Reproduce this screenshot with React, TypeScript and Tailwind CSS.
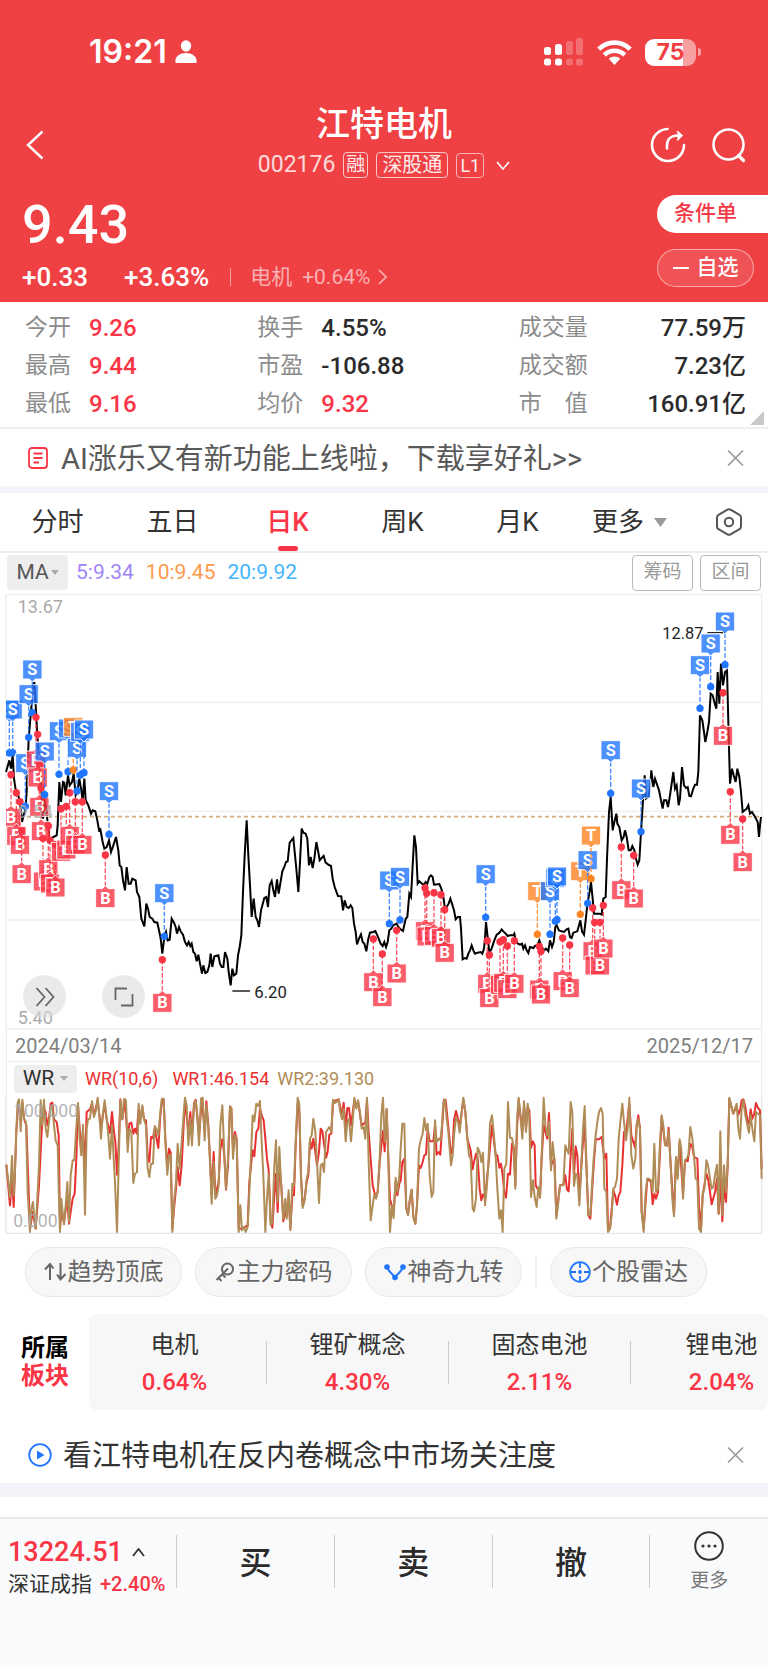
import type { ReactNode } from "react";

type Point = [number, number];

const parse = (text: string, dx = 0, dy = 0): Point[] =>
  text
    .trim()
    .split(/\s+/)
    .map((pair) => {
      const [x, y] = pair.split(",").map(Number);
      return [x + dx, y + dy];
    });

const toPoints = (points: Point[]) => points.map((p) => p.join(",")).join(" ");

const PRICE = toPoints([
  ...parse(`18,540 28,505 33,530 38,490 42,560 48,600 55,610 60,635 66,690 72,665 76,655 80,600 86,440 92,370 98,300
    103,270 107,340 112,430 118,515 124,590 129,680 134,620 138,650 144,700 150,740 160,735 170,730 173,700 178,570
    183,630 189,570 193,572 197,610 204,550 209,580 216,570 221,545 227,610 232,600 238,560 243,590 248,625 253,560
    257,625 265,640 273,665 278,655 286,658 292,685 297,715 301,712 308,750 313,770 320,765 327,745 333,780 340,760
    348,735 355,775 359,820 364,825 369,865 375,895 380,825 386,875 392,875 397,860 407,865 411,900 418,915 424,980
    433,1003 439,935 444,950 449,975 457,980 463,990 472,992 477,1015 482,1040 487,1085 493,1035 498,1020 503,1045
    509,1043 515,980 522,992 527,1005 531,1025 537,1005 543,1020 549,1028 555,1050 561,1060 566,1050 571,1062 575,1055
    580,1080 585,1085 590,1108 595,1088 600,1115 606,1145 610,1120 616,1143 622,1140 628,1120 632,1085 637,1125
    643,1093 655,1090 660,1115 665,1125 670,1125 675,1080 682,1100 686,1140 692,1180 697,1130 702,1150 709,1145
    714,1090 719,1065 724,1030 729,900 734,790 740,685 745,790 750,880`),
  ...parse(
    `5,405 11,350 17,405 22,415 27,435 33,385 43,348 49,345 54,375 59,310 65,297 70,325 75,345 81,292 86,335 97,268
    103,255 108,240 113,238 119,182 130,168 135,220 139,260 145,330 150,240 155,140 160,152 167,155 172,170 177,250
    182,225 188,258 193,230 199,180 204,205 209,235 215,228 221,222 227,242 235,248 243,252 248,290 254,315 264,342
    274,343 279,385 284,355 290,375 296,378 302,370 307,378 312,425 317,450 321,487 327,470 333,457 338,480 343,485
    349,508 355,470 360,452 370,450 376,447 382,460 392,485 398,492 403,480 408,495 413,480 418,445 424,440 430,430
    440,425 445,435 450,440 459,447 467,410 472,405 478,335 483,345 488,250 493,160 498,195 503,305 508,298 516,305
    522,308 527,300 532,305 538,285 543,280 548,285 552,308 562,307 568,306 574,320 580,345 585,380 590,375 596,365
    601,350 606,365 612,385 617,412 623,405 630,405 633,440 638,532 645,528 650,530 655,515 660,505 665,490 670,505
    675,515 683,512 692,510 697,515 702,500 705,470 708,420 713,465 718,510 723,505 728,490 733,475 740,458 745,455
    750,450 755,442 760,448 767,455 773,462 780,460 790,460`,
    750,
    570
  ),
  ...parse(
    `163,1025 168,1050 174,1055 180,1058 186,1055 190,1070 195,1060 200,1075 205,1083 210,1065 220,1068 225,1062
    232,1060 238,1045 245,1065 252,1075 258,1070 265,1078 270,1045 276,1065 281,1050 286,1005 290,1000 297,1015
    305,1018 312,1020 320,1012 325,1010 330,1035 335,1038 340,1022 352,1018 357,1000 361,985 366,1018 372,1028
    377,985 383,930 388,905 393,870 398,920 402,965 410,965 418,965 425,968 430,920 437,915 441,800 447,660 452,615
    458,715 463,690 469,665 472,695 478,705 485,745 491,735 495,715 500,735 506,775 512,775 517,762 523,775 528,800
    533,818 538,805 543,720 548,640 554,550 558,620 565,615 570,590 574,535 580,585 585,560 592,580 597,595 602,620
    608,650 612,625 619,625 624,645 630,610 640,540 645,590 650,580 656,640 660,620 666,525 672,580 678,588 683,585
    688,612 693,613 700,590 705,578 711,578 715,540 720,370 727,385 732,420 736,450 742,420 747,390 752,305 758,310
    763,330 769,350 773,240 778,335 783,215 789,280 795,240 801,235 806,430 810,575 816,530 821,550 827,570 832,530
    838,555 843,600 848,660 854,655 860,650 865,640 870,665 876,660 882,670 888,680 893,690 897,735 900,700 903,675`,
    1380
  ),
]);

const WR_TOP = -189;

const WR_SLOW = toPoints([
  ...parse(
    `19,398 30,520 36,430 41,525 49,300 55,210 62,260 67,210 72,260 79,280 85,450 90,590 98,540 107,590 117,460
    125,300 130,225 137,240 142,280 147,260 152,215 157,212 162,262 170,270 176,310 180,590 184,540 192,570 202,500
    207,575 212,540 218,500 224,485 229,380 234,220 244,360 249,300 255,400 260,240 270,232 276,215 282,250 293,205
    303,290 314,215 320,262 330,303 336,240 341,290 346,330 351,428 356,340 361,202 367,262 375,202 383,330 388,275
    394,272 400,305 405,290 410,305 416,230 421,260 427,225 432,262 438,265 443,370 448,390 453,315 459,318 464,290
    475,348 481,250 487,200 491,202 496,320 502,410 507,350 512,362 517,590 523,520 528,470 533,405 539,460 545,400
    550,300 555,205 565,300 571,240 576,310 582,215 587,203 597,310 606,200 614,300 619,208 625,280 630,380 635,490
    641,360 646,490 656,450 661,350 667,322 673,370 678,473 684,400 690,223 694,228 699,350 705,300 710,320 716,590
    726,590 743,580 748,450 753,400 758,355 763,373 769,300 775,290 780,230 785,250 791,265 796,320 801,380 806,415
    812,570 817,587 823,490 828,425 833,540 838,400 844,460 850,568 856,530 860,555 866,490 871,590 877,490 882,490
    887,340 893,215 898,240 903,430 908,520 914,500 920,450 925,430 930,325 935,350 940,320 946,360 951,400 957,360
    962,290 967,297 972,335 978,377 983,360 988,308 994,305 999,208 1016,202 1026,250 1031,212 1037,290 1042,228
    1047,228 1053,280 1063,205 1069,225 1074,207 1085,280 1096,272 1101,205 1106,300 1112,380 1118,460 1123,480
    1128,495 1133,480 1139,390 1144,340 1149,297 1154,358 1160,232 1165,380`,
    0,
    WR_TOP
  ),
  ...parse(
    `30,500 36,525 41,540 47,450 52,490 58,455 62,445 67,390 73,380 79,530 84,548 90,500 95,473 100,555 106,575
    111,520 117,400 122,408 128,390 133,370 138,367 143,290 149,328 160,328 165,280 170,368 176,360 181,368 186,290
    192,203 197,203 205,285 213,365 218,350 222,265 228,237 234,260 239,285 244,250 250,202 256,240 262,320 272,355
    278,412 282,390 288,365 293,380 299,470 304,505 309,487 315,500 325,400 336,280 341,320 347,370 352,370 358,407
    363,395 368,430 373,480 378,497 384,425 390,428 396,335 401,345 406,460 411,290 416,203 427,300 432,220 438,290
    443,225 448,235 453,347 459,328 464,340 467,460 475,475 480,497 485,380 491,280 502,320 507,243 513,400 523,380
    529,550 540,460 550,458 556,430 561,473 566,478 572,370 577,290 582,430 587,343 592,370 598,500 604,400 609,330
    614,285 620,420 625,550 631,560 641,400 647,322 657,322 665,315 673,380 679,365 684,590 690,590 700,475 705,490
    711,518 716,490 721,480 727,400 732,300 738,305 748,215 754,310 765,347 770,280 775,250 780,290 785,540 791,590
    802,440 813,450 818,517 823,485 828,500 834,480 840,360 845,255 855,335 861,340 866,287 872,400 882,545 888,380
    893,430 899,330 909,490 915,385 923,388 931,335 937,345 942,375 952,380 957,520 963,590 968,490 979,425 984,440
    990,480 995,517 1005,480 1011,440 1016,545 1021,440 1027,568 1032,460 1038,510 1043,400 1048,200 1060,245
    1070,222 1075,248 1080,235 1085,205 1090,202 1096,225 1102,265 1107,275 1112,232 1117,260 1123,245 1128,213
    1134,228 1140,235 1145,410`,
    1140,
    WR_TOP
  ),
]);

const WR_FAST = toPoints([
  ...parse(
    `19,398 24,440 30,495 36,372 41,490 45,420 49,290 53,212 57,202 62,298 67,203 72,260 78,270 83,480 90,600 94,530
    99,510 103,560 107,590 112,500 117,400 122,205 127,280 132,203 137,290 142,315 147,270 152,225 157,225 162,280
    167,325 173,340 177,500 180,600 184,500 188,540 192,577 197,520 202,450 207,570 212,430 218,385 223,385 228,300
    234,213 239,320 244,370 249,278 255,548 260,290 264,262 270,260 276,208 282,255 288,235 293,197 298,250 303,320
    308,250 314,205 320,260 325,310 330,380 336,280 341,380 345,450 351,600 356,400 361,205 367,262 372,202 378,205
    383,360 388,290 394,300 400,453 405,425 411,420 416,215 421,275 427,220 432,262 438,280 443,410 448,435 453,395
    459,395 464,282 469,290 475,310 481,240 485,202 491,200 496,330 502,428 507,370 512,370 517,600 523,500 528,450
    533,335 539,410 545,330 550,260 555,197 560,220 565,340 571,260 576,340 582,220 587,205 592,250 597,340 603,200
    608,197 614,325 619,220 625,290 630,390 635,515 641,390 646,500 651,490 656,460 661,280 667,220 673,370 678,470
    684,380 690,225 694,230 699,380 705,310 710,320 716,600 721,520 726,595 732,585 737,600 743,585 748,480 753,370
    758,250 763,268 769,215 775,222 780,207 785,330 790,430 796,600 801,500 806,425 812,580 817,570 823,400 828,325
    833,510 838,345 844,470 850,560 856,500 860,560 866,475 871,595 877,455 882,460 887,330 893,197 898,215 903,440
    908,528 914,505 920,440 925,420 930,320 935,310 940,260 946,300 951,390 957,513 962,400 967,395 972,420 978,300
    988,285 994,300 999,203 1004,213 1010,210 1016,202 1020,235 1026,262 1031,230 1037,328 1042,270 1047,260
    1053,328 1058,270 1063,197 1069,230 1074,205 1080,240 1085,290 1091,285 1096,320 1101,197 1106,390 1112,565
    1118,520 1123,485 1128,500 1133,480 1139,380 1144,250 1149,197 1154,330 1160,230 1165,380`,
    0,
    WR_TOP
  ),
  ...parse(
    `30,600 36,520 41,558 47,437 52,480 58,430 62,350 67,275 73,275 79,530 84,548 90,500 95,473 100,555 106,575
    111,520 117,350 122,325 128,305 133,258 138,295 143,275 149,430 155,495 160,480 165,265 170,330 176,320 181,325
    186,280 190,210 195,203 200,260 205,300 213,400 218,370 222,310 228,255 234,270 239,302 244,250 250,197 256,240
    262,320 267,370 272,380 278,530 282,538 288,500 293,347 299,360 304,390 309,362 315,520 320,470 325,400 330,275
    336,250 341,300 347,370 352,470 358,560 363,535 368,600 373,410 379,395 384,210 390,318 396,318 401,345 406,470
    411,260 416,197 421,250 427,320 432,208 438,300 443,215 448,260 453,495 459,445 464,495 470,525 475,465 480,495
    485,370 491,197 496,280 502,310 507,270 513,415 518,330 523,380 529,560 534,520 540,460 550,460 556,340 561,355
    566,365 572,210 577,240 582,462 587,425 592,430 598,520 604,400 609,290 614,222 620,420 625,550 631,550 636,460
    641,380 647,310 652,270 657,240 663,228 668,245 673,470 679,480 684,600 690,590 695,550 700,470 705,465 711,440
    716,320 721,270 727,215 732,270 738,325 743,290 748,197 754,370 760,410 766,380 770,280 775,262 780,290 785,540
    791,600 797,480 802,440 807,440 813,445 818,480 823,335 828,480 834,470 840,330 845,250 850,280 855,340 861,342
    866,295 872,400 877,500 882,553 888,375 893,440 899,322 904,350 909,500 915,385 920,380 925,370 931,285 937,320
    942,370 947,440 952,445 957,590 963,600 968,490 974,465 979,385 984,400 990,440 995,470 1000,465 1005,430
    1011,398 1016,545 1021,298 1027,550 1032,400 1038,480 1043,400 1048,197 1054,225 1060,245 1065,230 1070,215
    1075,290 1080,320 1085,230 1090,205 1096,250 1102,280 1107,302 1112,250 1117,290 1123,328 1128,240 1134,245
    1140,250 1145,440`,
    1140,
    WR_TOP
  ),
]);

type Kind = "S" | "B" | "T";
type Trade = { kind: Kind; x: number; y: number };

const trades = (kind: Kind, text: string): Trade[] => parse(text).map(([x, y]) => ({ kind, x, y }));

const TRADES: Trade[] = [
  ...trades(
    "S",
    `28,483 38,482 76,643 86,436 97,362 134,608 177,547 204,539 231,597 241,549 252,542 327,727 493,1033 1168,995
    1200,984 1457,976 1650,1027 1666,988 1671,983 1763,934 1832,604 1923,719 2100,349 2132,284 2175,218`
  ),
  ...trades(
    "B",
    `33,548 49,602 60,629 65,717 108,376 113,427 118,515 123,588 129,739 145,702 150,745 166,757 183,650 199,643
    209,602 226,629 247,629 316,789 487,1103 1120,1041 1147,1086 1190,1015 1275,888 1280,904 1302,902 1323,908
    1334,953 1462,1046 1468,1089 1500,1049 1510,1043 1522,1062 1543,1046 1618,1063 1623,1078 1688,1038 1709,1059
    1778,948 1784,991 1800,991 1810,940 1864,765 1901,790 2169,302 2191,599 2228,681`
  ),
  ...trades("T", "220,534 1612,1027 1741,967 1773,860"),
].sort((a, b) => a.x - b.x);

const TRADE_COLOR: Record<Kind, string> = { S: "#2176ff", B: "#fa3545", T: "#ff8422" };

function TradeFlag({ kind, x, y }: Trade) {
  const color = TRADE_COLOR[kind];
  const below = kind === "B";
  const shape = below
    ? "M-29,-28 H-9 L0,-37 L9,-28 H29 V29 H-29 Z"
    : "M-29,-29 H29 V28 H9 L0,37 L-9,28 H-29 Z";
  const cy = below ? y + 129 : y - 129;
  return (
    <g>
      <line x1={x} x2={x} y1={y} y2={below ? cy - 37 : cy + 37} stroke={color} strokeWidth={4} strokeDasharray="14 6" opacity={0.85} />
      <g transform={`translate(${x} ${cy})`}>
        <path d={shape} fill={color} fillOpacity={0.8} stroke="#fff" strokeWidth={3} strokeOpacity={0.9} />
        <text y={17} textAnchor="middle" fontSize={49} fontWeight={700} fill="#fff">
          {kind}
        </text>
      </g>
      <circle cx={x} cy={y} r={11} fill={color} />
    </g>
  );
}

function PriceChart() {
  return (
    <svg viewBox="0 0 2304 1314" className="block h-auto w-full" role="img" aria-label="日K走势">
      <clipPath id="plot">
        <rect x="18" y="0" width="2267" height="1314" />
      </clipPath>
      <g stroke="#eeeeee" strokeWidth={4} fill="none">
        <path d="M18,8 H2285 V1314 M18,8 V1314 M18,331 H2285 M18,658 H2285 M18,984 H2285 M18,1311 H2285" />
      </g>
      <text x={53} y={63} fontSize={54} fill="#aaaaaa">13.67</text>
      <text x={53} y={1296} fontSize={54} fill="#aaaaaa">5.40</text>
      <path d="M18,674 H2285" stroke="#d3ae78" strokeWidth={5} strokeDasharray="12 9" />
      <polyline points={PRICE} fill="none" stroke="#000" strokeWidth={6} strokeLinejoin="miter" />
      <path d="M697,1197 H750 M2122,122 H2175" stroke="#222" strokeWidth={4} />
      <text x={763} y={1218} fontSize={50} fill="#222222">6.20</text>
      <text x={1987} y={142} fontSize={49} fill="#222222">12.87</text>
      <g clipPath="url(#plot)">
        {TRADES.map((t) => (
          <TradeFlag key={`${t.kind}${t.x}`} {...t} />
        ))}
      </g>
      <text x={53} y={679} fontSize={54} fill="#aaaaaa" fillOpacity={0.85}>9.54</text>
    </svg>
  );
}

function WrChart() {
  return (
    <svg viewBox="0 0 2304 420" className="block h-auto w-full" role="img" aria-label="WR指标">
      <path d="M18,0 V415 H2285 V0" stroke="#e6e6e6" strokeWidth={4} fill="none" />
      <polyline points={WR_SLOW} fill="none" stroke="#e93030" strokeWidth={6} strokeLinejoin="round" />
      <polyline points={WR_FAST} fill="none" stroke="#b08d57" strokeWidth={6} strokeLinejoin="round" />
      <text x={42} y={65} fontSize={53} fill="#aaaaaa" fillOpacity={0.9}>100.000</text>
      <text x={40} y={395} fontSize={53} fill="#aaaaaa" fillOpacity={0.9}>0.000</text>
    </svg>
  );
}

function Glyph({ className, box, children }: { className: string; box: string; children: ReactNode }) {
  return (
    <svg viewBox={box} className={className} fill="none" stroke="currentColor" aria-hidden="true">
      {children}
    </svg>
  );
}

function StatusBar() {
  return (
    <div className="flex h-[104px] items-center justify-between pr-[67px] pl-[89px]">
      <div className="flex items-center gap-2">
        <span className="font-['Inter'] text-[32px] leading-8 font-semibold">19:21</span>
        <Glyph className="h-6 w-[22px]" box="0 0 22 24">
          <g fill="currentColor" stroke="none">
            <ellipse cx="11" cy="6" rx="5.2" ry="5.8" />
            <path d="M0.3 21.5C0.3 16 5 13 11 13s10.700 3 10.700 8.500c0 1-.6 1.500-1.600 1.500H1.900c-1 0-1.600-.5-1.600-1.500Z" />
          </g>
        </Glyph>
      </div>
      <div className="flex items-center gap-[13px]">
        <Glyph className="h-7 w-10" box="0 0 40 28">
          <g fill="currentColor" stroke="none">
            <rect x="0" y="9" width="7" height="8" rx="2.500" />
            <rect x="11" y="6" width="7" height="11" rx="2.500" />
            <rect x="0" y="20.500" width="7" height="7" rx="2.500" />
            <rect x="11" y="20.500" width="7" height="7" rx="2.500" />
            <g opacity="0.250">
              <rect x="22" y="3" width="7" height="14" rx="2.500" />
              <rect x="32" y="0" width="7" height="17" rx="2.500" />
              <rect x="22" y="20.500" width="7" height="7" rx="2.500" />
              <rect x="32" y="20.500" width="7" height="7" rx="2.500" />
            </g>
          </g>
        </Glyph>
        <Glyph className="h-[25px] w-[35px]" box="0 0 35 25">
          <g strokeWidth="4.600">
            <path d="M1.800 9.200C10.500 0.400 24.500 0.400 33.200 9.200" />
            <path d="M7.300 15C13 9.300 22 9.300 27.700 15" />
          </g>
          <path d="M11.800 18.800c3.200-3 8.200-3 11.400 0L17.500 25Z" fill="currentColor" stroke="none" />
        </Glyph>
        <div className="flex items-center gap-0.5">
          <div className="flex h-[27px] w-[51px] items-center justify-center rounded-[9px] bg-linear-to-r from-white from-75% to-white/50 to-75% font-['Inter'] text-[23px] leading-none font-bold text-[#ef4043]">
            75
          </div>
          <div className="h-2 w-[3px] rounded-r-full bg-white/50" />
        </div>
      </div>
    </div>
  );
}

function Header() {
  return (
    <header className="bg-[#ef4043] pb-[11px] text-white">
      <StatusBar />
      <div className="relative flex flex-col items-center">
        <h1 className="text-[34px] leading-10 font-medium">江特电机</h1>
        <div className="mt-[7px] flex h-7 items-center gap-2">
          <span className="text-[23px] leading-7 text-white/80">002176</span>
          <span className="flex h-[26px] items-center rounded border border-white/70 px-0.5 text-[19px] text-white/90">融</span>
          <span className="flex h-[26px] items-center rounded border border-white/70 px-[5px] text-[20px] text-white/90">深股通</span>
          <span className="flex h-[25px] items-center rounded border border-white/60 px-[3px] text-[18px] text-white/90">L1</span>
          <Glyph className="ml-1 h-[9px] w-[14px]" box="0 0 14 9">
            <path d="M1 1l6 7 6-7" strokeWidth="1.600" />
          </Glyph>
        </div>
        <div className="absolute inset-x-0 top-[23px] flex items-center justify-between pr-[22px] pl-[26px]">
          <button type="button" aria-label="返回">
            <Glyph className="h-[30px] w-[18px]" box="0 0 18 30">
              <path d="M16.500 1.500L2 15l14.500 13.500" strokeWidth="2.400" />
            </Glyph>
          </button>
          <div className="flex items-center gap-[26px]">
            <button type="button" aria-label="分享">
              <Glyph className="h-9 w-9" box="0 0 36 36">
                <g strokeWidth="2.600" strokeLinecap="round">
                  <path d="M17.500 2A16 16 0 1 0 34 18" />
                  <path d="M17 21.500v-3.500c0-5.500 4-9.500 11-9.500h3" />
                  <path d="M27.500 4.500l4.500 4-4.500 4.500" fill="currentColor" strokeWidth="1.500" />
                </g>
              </Glyph>
            </button>
            <button type="button" aria-label="搜索">
              <Glyph className="h-9 w-[34px]" box="0 0 34 36">
                <circle cx="16.500" cy="17.500" r="15" strokeWidth="2.600" />
                <path d="M26.500 28.500l5 5" strokeWidth="3.200" strokeLinecap="round" />
              </Glyph>
            </button>
          </div>
        </div>
      </div>
      <div className="mt-[13px] flex justify-between">
        <div className="pl-[22px]">
          <div className="text-[54px] leading-[66px] font-medium">9.43</div>
          <div className="mt-[5px] flex h-7 items-center text-[26px] leading-7 font-medium">
            <span>+0.33</span>
            <span className="ml-9">+3.63%</span>
            <span className="ml-[21px] h-[18px] w-px bg-white/50" />
            <a href="#sector" className="ml-[19px] flex items-center text-[21px] font-normal text-white/60">
              电机
              <span className="ml-2.5">+0.64%</span>
              <Glyph className="ml-2 h-4 w-[9px]" box="0 0 9 16">
                <path d="M1 1l7 7-7 7" strokeWidth="1.600" />
              </Glyph>
            </a>
          </div>
        </div>
        <div className="flex flex-col gap-4 pt-[3px]">
          <button type="button" className="h-[38px] w-[111px] rounded-l-full bg-white pl-[17px] text-left text-[21px] font-medium text-[#f33a46]">
            条件单
          </button>
          <button type="button" className="flex h-[38px] w-[97px] items-center justify-center gap-2 rounded-full border border-white/50 bg-white/10 text-[21px] font-medium">
            <span className="h-0.5 w-4 bg-white" />
            自选
          </button>
        </div>
      </div>
    </header>
  );
}

const STATS: { label: string; value: string; red?: boolean }[] = [
  { label: "今开", value: "9.26", red: true },
  { label: "换手", value: "4.55%" },
  { label: "成交量", value: "77.59万" },
  { label: "最高", value: "9.44", red: true },
  { label: "市盈", value: "-106.88" },
  { label: "成交额", value: "7.23亿" },
  { label: "最低", value: "9.16", red: true },
  { label: "均价", value: "9.32", red: true },
  { label: "市\u3000值", value: "160.91亿" },
];

function Stats() {
  return (
    <section className="relative border-b-2 border-[#eeeeee] pt-[7px] pb-1">
      <dl className="grid grid-cols-[233fr_262fr_228fr] pr-[22px] pl-[25px]">
        {STATS.map((s, i) => (
          <div key={s.label} className={i % 3 === 2 ? "flex justify-between" : "flex"}>
            <dt className="w-16 shrink-0 text-[23px] leading-[38px] whitespace-nowrap text-[#8c8c8c]">{s.label}</dt>
            <dd className={s.red ? "text-2xl leading-[38px] font-medium text-[#fa3545]" : "text-2xl leading-[38px] font-medium text-[#2b2b2b]"}>
              {s.value}
            </dd>
          </div>
        ))}
      </dl>
      <Glyph className="absolute right-1 bottom-0.5 h-[14px] w-[14px] text-[#c8c8c8]" box="0 0 14 14">
        <path d="M14 0v14H0Z" fill="currentColor" stroke="none" />
      </Glyph>
    </section>
  );
}

function CloseIcon() {
  return (
    <Glyph className="h-4 w-[17px] text-[#999999]" box="0 0 17 16">
      <path d="M1 0.500l15 15M16 0.500l-15 15" strokeWidth="1.600" />
    </Glyph>
  );
}

function Notice({ icon, text, tone }: { icon: ReactNode; text: string; tone: string }) {
  return (
    <div className="flex h-[57px] items-center pr-6 pl-7">
      {icon}
      <a href="#notice" className={tone}>
        {text}
      </a>
      <button type="button" aria-label="关闭">
        <CloseIcon />
      </button>
    </div>
  );
}

const TABS = ["分时", "五日", "日K", "周K", "月K"];

function Tabs() {
  return (
    <nav className="grid h-[60px] grid-cols-[repeat(5,115fr)_110fr_83fr] border-b-2 border-[#eeeeee] text-[26px] text-[#333333]">
      {TABS.map((tab) => (
        <button
          key={tab}
          type="button"
          className={tab === "日K" ? "relative font-medium text-[#fa3545]" : "relative"}
        >
          {tab}
          {tab === "日K" && <span className="absolute bottom-0 left-1/2 h-[5px] w-5 -translate-x-1/2 rounded-full bg-[#fa3545]" />}
        </button>
      ))}
      <button type="button" className="flex items-center gap-2.5 pl-[17px]">
        更多
        <Glyph className="h-[9px] w-[13px] text-[#999999]" box="0 0 13 9">
          <path d="M0 0h13L6.500 9Z" fill="currentColor" stroke="none" />
        </Glyph>
      </button>
      <button type="button" aria-label="设置" className="flex items-center justify-end pr-[26px]">
        <Glyph className="h-7 w-[26px] text-[#555555]" box="0 0 26 28">
          <path d="M11.500 1.700a3 3 0 0 1 3 0l9 5.200a3 3 0 0 1 1.500 2.600v9a3 3 0 0 1-1.500 2.600l-9 5.200a3 3 0 0 1-3 0l-9-5.200A3 3 0 0 1 1 18.500v-9a3 3 0 0 1 1.500-2.600Z" strokeWidth="2" />
          <circle cx="13" cy="14" r="4.200" strokeWidth="2" />
        </Glyph>
      </button>
    </nav>
  );
}

function SmallCaret() {
  return (
    <Glyph className="h-[5px] w-2 text-[#aaaaaa]" box="0 0 8 5">
      <path d="M0 0h8L4 5Z" fill="currentColor" stroke="none" />
    </Glyph>
  );
}

const TOOLS: { label: string; icon: ReactNode }[] = [
  {
    label: "趋势顶底",
    icon: (
      <Glyph className="h-5 w-[23px]" box="0 0 23 20">
        <path d="M6 18V3M1 7.500L6 2l3.500 4.500M16.500 1v16M13 12.500l3.500 5 5-5.500" strokeWidth="2" />
      </Glyph>
    ),
  },
  {
    label: "主力密码",
    icon: (
      <Glyph className="h-5 w-[21px]" box="0 0 21 20">
        <circle cx="12.500" cy="7" r="5.500" strokeWidth="2" />
        <path d="M13 6.500L1.500 18M3.500 16l3 3M7.500 12.500l3 3" strokeWidth="2" />
      </Glyph>
    ),
  },
  {
    label: "神奇九转",
    icon: (
      <Glyph className="h-5 w-[23px] text-[#2176ff]" box="0 0 23 20">
        <path d="M3 5c2 6 6 6 8 11 2-5 6-5 8-11" strokeWidth="2" />
        <g fill="currentColor" stroke="none">
          <circle cx="3" cy="5" r="2.800" />
          <circle cx="11" cy="15.500" r="2.800" />
          <circle cx="19" cy="5" r="2.800" />
        </g>
      </Glyph>
    ),
  },
  {
    label: "个股雷达",
    icon: (
      <Glyph className="h-[22px] w-[22px] text-[#2176ff]" box="0 0 22 22">
        <circle cx="11" cy="11" r="9.800" strokeWidth="1.800" />
        <path d="M11 1v6M11 15v6M1 11h6M15 11h6" strokeWidth="1.800" />
        <circle cx="11" cy="11" r="1.900" fill="currentColor" stroke="none" />
      </Glyph>
    ),
  },
];

const SECTORS = [
  { name: "电机", change: "0.64%" },
  { name: "锂矿概念", change: "4.30%" },
  { name: "固态电池", change: "2.11%" },
  { name: "锂电池", change: "2.04%" },
];

function Toolbar() {
  return (
    <div className="flex items-center gap-[13px] overflow-hidden pt-3 pl-[25px]">
      {TOOLS.map((tool, i) => (
        <div key={tool.label} className="flex shrink-0 items-center gap-[13px]">
          {i === 3 && <span className="h-8 w-0.5 bg-[#f0f0f0]" />}
          <button
            type="button"
            className="flex h-[50px] w-[157px] items-center justify-center gap-px rounded-full border border-[#e8e8e8] bg-[#f7f7f7] text-2xl text-[#666666]"
          >
            {tool.icon}
            {tool.label}
          </button>
        </div>
      ))}
    </div>
  );
}

function Sectors() {
  return (
    <section className="mt-[17px] flex overflow-hidden">
      <h2 className="flex w-[89px] shrink-0 flex-col justify-center pl-[21px] text-2xl leading-7 font-bold text-black">
        <span>所属</span>
        <span className="text-[#fa3545]">板块</span>
      </h2>
      <div className="flex h-24 flex-1 overflow-hidden rounded-lg bg-[#f7f7f7]">
        {SECTORS.map((s, i) => (
          <a key={s.name} href="#sector" className={i > 0 ? "flex w-[182px] shrink-0 items-center" : "flex w-[177px] shrink-0 items-center pr-1.5"}>
            {i > 0 && <span className="h-[43px] w-px bg-[#cccccc]" />}
            <span className="flex flex-1 flex-col items-center pt-1 text-2xl leading-[37px] text-[#333333]">
              {s.name}
              <span className="font-medium text-[#fa3545]">{s.change}</span>
            </span>
          </a>
        ))}
      </div>
    </section>
  );
}

function BottomBar() {
  return (
    <footer className="flex h-[149px] border-t-2 border-[#e8e9ec] bg-[#f9fafc] pt-4">
      <button type="button" className="flex h-[52px] w-[176px] shrink-0 flex-col pl-2 text-left">
        <span className="flex items-center gap-[9px] pt-[3px] text-[27px] leading-[28px] font-medium text-[#fa3545]">
          13224.51
          <Glyph className="h-[9px] w-[13px] text-[#333333]" box="0 0 13 9">
            <path d="M1 8l5.500-7L12 8" strokeWidth="1.800" />
          </Glyph>
        </span>
        <span className="mt-1 flex items-center gap-2 text-[21px] leading-[26px] whitespace-nowrap text-[#333333]">
          深证成指 <span className="text-xl font-medium text-[#fa3545]">+2.40%</span>
        </span>
      </button>
      {["买", "卖", "撤"].map((label) => (
        <button
          key={label}
          type="button"
          className="h-[53px] flex-4 border-l border-[#cccccc] text-[32px] leading-[56px] font-medium text-[#2b2b2b]"
        >
          {label}
        </button>
      ))}
      <button type="button" className="flex h-[53px] flex-3 flex-col items-center border-l border-[#cccccc] text-[19px] leading-6 text-[#777777]">
        <Glyph className="-mt-1 mb-2 h-[30px] w-[30px] shrink-0 text-[#333333]" box="0 0 30 30">
          <circle cx="15" cy="15" r="13.800" strokeWidth="2" />
          <g fill="currentColor" stroke="none">
            <circle cx="9" cy="15" r="1.600" />
            <circle cx="15" cy="15" r="1.600" />
            <circle cx="21" cy="15" r="1.600" />
          </g>
        </Glyph>
        更多
      </button>
    </footer>
  );
}

export default function App() {
  return (
    <div className="w-full bg-white font-['Roboto','Noto_Sans_CJK_SC',sans-serif]">
      <Header />
      <Stats />
      <Notice
        tone="ml-[11px] flex-1 pt-0.5 text-[29px] leading-9 text-[#595959]"
        text="AI涨乐又有新功能上线啦，下载享好礼>>"
        icon={
          <Glyph className="mr-0.5 h-[22px] w-5 text-[#fa3545]" box="0 0 20 22">
            <rect x="1" y="1" width="18" height="20" rx="3" strokeWidth="1.800" />
            <path d="M5.500 6.500h9M5.500 11h9M5.500 15.500h5.500" strokeWidth="1.800" />
          </Glyph>
        }
      />
      <div className="h-[7px] bg-[#f2f4f9]" />
      <Tabs />
      <div className="flex h-[39px] items-center px-[7px] text-[21px]">
        <button type="button" className="flex h-[35px] w-[61px] items-center justify-center gap-0.5 rounded bg-[#eeeeee] text-[#555555]">
          MA
          <SmallCaret />
        </button>
        <div className="ml-2 flex flex-1 gap-3">
          <span className="text-[#a184f5]">5:9.34</span>
          <span className="text-[#fd9a4b]">10:9.45</span>
          <span className="text-[#45b5fb]">20:9.92</span>
        </div>
        <div className="flex gap-[7px] text-[19px] text-[#999999]">
          <button type="button" className="h-9 w-[61px] rounded border border-[#bbbbbb]">筹码</button>
          <button type="button" className="h-9 w-[61px] rounded border border-[#bbbbbb]">区间</button>
        </div>
      </div>
      <div className="relative">
        <PriceChart />
        <div className="absolute bottom-3 left-[23px] flex gap-9 text-[#666666]">
          <button type="button" aria-label="展开" className="flex h-[43px] w-[43px] items-center justify-center rounded-full bg-[#dcdcdc]/60">
            <Glyph className="h-5 w-5" box="0 0 20 20">
              <path d="M1.500 1l8 9-8 9M10.500 1l8 9-8 9" strokeWidth="1.800" />
            </Glyph>
          </button>
          <button type="button" aria-label="全屏" className="flex h-[43px] w-[43px] items-center justify-center rounded-full bg-[#dcdcdc]/60">
            <Glyph className="h-5 w-5" box="0 0 20 20">
              <path d="M1.500 13V1.500H13M18.500 7v11.500H7" strokeWidth="1.800" />
            </Glyph>
          </button>
        </div>
      </div>
      <div className="mx-1.5 flex h-8 items-center justify-between border-x border-b border-[#eeeeee] px-2 text-[20px] text-[#808080]">
        <span>2024/03/14</span>
        <span>2025/12/17</span>
      </div>
      <div className="mx-1.5 flex h-[33px] items-center border-x border-[#eeeeee] pl-[7px] text-lg">
        <button type="button" className="flex h-7 w-[63px] items-center justify-center gap-1.5 rounded bg-[#eeeeee] text-[21px] text-[#333333]">
          WR
          <SmallCaret />
        </button>
        <span className="ml-2 text-[#e93030]">WR(10,6)</span>
        <span className="ml-3.5 text-[#e93030]">WR1:46.154</span>
        <span className="ml-2 text-[#b08d57]">WR2:39.130</span>
      </div>
      <WrChart />
      <Toolbar />
      <Sectors />
      <div className="pt-4">
        <Notice
          tone="ml-[11px] flex-1 pt-0.5 text-[29px] leading-9 text-[#333333]"
          text="看江特电机在反内卷概念中市场关注度"
          icon={
            <Glyph className="h-6 w-6 text-[#2176ff]" box="0 0 24 24">
              <circle cx="12" cy="12" r="10.800" strokeWidth="1.800" />
              <path d="M9 7.500v9l7.500-4.500Z" fill="currentColor" stroke="none" />
            </Glyph>
          }
        />
      </div>
      <div className="h-[14px] bg-[#f2f4f9]" />
      <div className="h-5" />
      <BottomBar />
    </div>
  );
}
